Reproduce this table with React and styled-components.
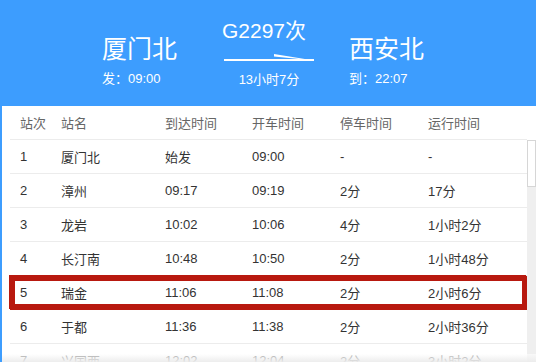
import React from "react";
import styled, { createGlobalStyle } from "styled-components";

const GlobalStyle = createGlobalStyle`
  html, body {
    margin: 0;
    padding: 0;
    background: #3d9dfe;
    font-family: "Liberation Sans", "Noto Sans CJK SC", sans-serif;
  }
`;

const Page = styled.div`
  width: 536px;
  height: 362px;
  display: flex;
  flex-direction: column;
  overflow: hidden;
`;

const Banner = styled.div`
  height: 106px;
  box-sizing: border-box;
  display: flex;
  align-items: flex-start;
  padding: 0 0 0 102px;
  color: #fff;
`;

const StationBlock = styled.div`
  display: flex;
  flex-direction: column;
  width: ${p => p.width}px;
  margin-left: ${p => p.offset || 0}px;
  padding-top: 34px;
`;

const StationName = styled.div`
  font-size: 25px;
  line-height: 30px;
`;

const StationTime = styled.div`
  font-size: 13px;
  line-height: 16px;
  margin-top: 7px;
`;

const TrainBlock = styled.div`
  width: 90px;
  display: flex;
  flex-direction: column;
  align-items: center;
  padding-top: 18px;
`;

const TrainNo = styled.div`
  font-size: 21px;
  line-height: 26px;
  margin-left: -10px;
`;

const Arrow = styled.svg`
  display: block;
  margin-top: 9px;
`;

const Duration = styled.div`
  font-size: 13px;
  line-height: 16px;
  margin-top: 10px;
`;

const Panel = styled.div`
  position: relative;
  flex: 1;
  margin-left: 2px;
  background: #fff;
  display: flex;
  flex-direction: column;
  min-height: 0;

  &::after {
    content: "";
    position: absolute;
    left: 0;
    right: 0;
    bottom: 0;
    height: 8px;
    background: linear-gradient(rgba(255, 255, 255, 0.6), rgba(236, 236, 236, 0.97));
  }
`;

const cols = "41px 104px 87px 88px 88px 1fr";

const HeadRow = styled.div`
  display: grid;
  grid-template-columns: ${cols};
  height: 33px;
  align-items: center;
  margin: 0 9px 0 8px;
  padding-left: 10px;
  font-size: 13px;
  color: #666;
  border-bottom: 1px solid #ececec;
`;

const Scroller = styled.div`
  flex: 1;
  min-height: 0;
  display: flex;
`;

const Body = styled.div`
  flex: 1;
  overflow: hidden;
  padding-left: 8px;
`;

const Track = styled.div`
  width: 9px;
  background: #efefef;
`;

const Thumb = styled.div`
  height: 47px;
  box-sizing: border-box;
  background: #fff;
  border: 1px solid #d6d6d6;
`;

const Row = styled.div`
  display: grid;
  grid-template-columns: ${cols};
  height: 33px;
  align-items: center;
  padding-left: 10px;
  font-size: 13px;
  color: #333;
  border-bottom: 1px solid ${p => (p.highlight ? "#b8190f" : "#ececec")};
  box-shadow: ${p =>
    p.highlight ? "inset 0 0 0 5px #b8190f, -1px -1px 0 #b8190f" : "none"};
`;

const Cell = styled.div`
  white-space: nowrap;
`;

const stops = [
  ["厦门北", 0, 0],
  ["漳州", 17, 2],
  ["龙岩", 62, 4],
  ["长汀南", 108, 2],
  ["瑞金", 126, 2],
  ["于都", 156, 2],
  ["兴国西", 182, 2],
  ["吉安西", 228, 3],
  ["新余北", 270, 2],
  ["宜春", 298, 2],
  ["萍乡北", 326, 2],
  ["长沙南", 372, 6],
  ["岳阳东", 416, 2],
  ["赤壁北", 442, 2],
  ["咸宁北", 460, 2],
  ["武汉", 490, 7],
  ["孝感北", 521, 2],
  ["信阳东", 565, 2],
  ["驻马店西", 593, 2],
  ["漯河西", 614, 2],
  ["许昌东", 634, 2],
  ["郑州东", 668, 8],
  ["巩义南", 698, 2],
  ["洛阳龙门", 723, 3],
  ["三门峡南", 750, 2],
  ["华山北", 768, 2],
  ["西安北", 787, 0]
];

const clock = m => {
  const t = 9 * 60 + m;
  const h = Math.floor(t / 60);
  const mm = t % 60;
  return `${h < 10 ? "0" : ""}${h}:${mm < 10 ? "0" : ""}${mm}`;
};

const span = m => {
  const h = Math.floor(m / 60);
  return h ? `${h}小时${m % 60}分` : `${m}分`;
};

const rows = stops.map(([name, arr, stop], i) => {
  const first = i === 0;
  const last = i === stops.length - 1;
  return {
    no: i + 1,
    name,
    arrive: first ? "始发" : clock(arr),
    depart: last ? "终到" : clock(arr + stop),
    stop: first || last ? "-" : `${stop}分`,
    run: first ? "-" : span(arr)
  };
});

const App = () => (
  <Page>
    <GlobalStyle />
    <Banner>
      <StationBlock width={122}>
        <StationName>厦门北</StationName>
        <StationTime>发：09:00</StationTime>
      </StationBlock>
      <TrainBlock>
        <TrainNo>G2297次</TrainNo>
        <Arrow width="90" height="9" viewBox="0 0 90 9">
          <rect x="0" y="6" width="90" height="2" fill="#fff" />
          <polygon points="50,1 90,7.6 50,3.6" fill="#fff" />
        </Arrow>
        <Duration>13小时7分</Duration>
      </TrainBlock>
      <StationBlock width={100} offset={35}>
        <StationName>西安北</StationName>
        <StationTime>到：22:07</StationTime>
      </StationBlock>
    </Banner>
    <Panel>
      <HeadRow>
        <Cell>站次</Cell>
        <Cell>站名</Cell>
        <Cell>到达时间</Cell>
        <Cell>开车时间</Cell>
        <Cell>停车时间</Cell>
        <Cell>运行时间</Cell>
      </HeadRow>
      <Scroller>
        <Body>
          {rows.map(r => (
            <Row key={r.no} highlight={r.no === 5}>
              <Cell>{r.no}</Cell>
              <Cell>{r.name}</Cell>
              <Cell>{r.arrive}</Cell>
              <Cell>{r.depart}</Cell>
              <Cell>{r.stop}</Cell>
              <Cell>{r.run}</Cell>
            </Row>
          ))}
        </Body>
        <Track>
          <Thumb />
        </Track>
      </Scroller>
    </Panel>
  </Page>
);

export default App;
